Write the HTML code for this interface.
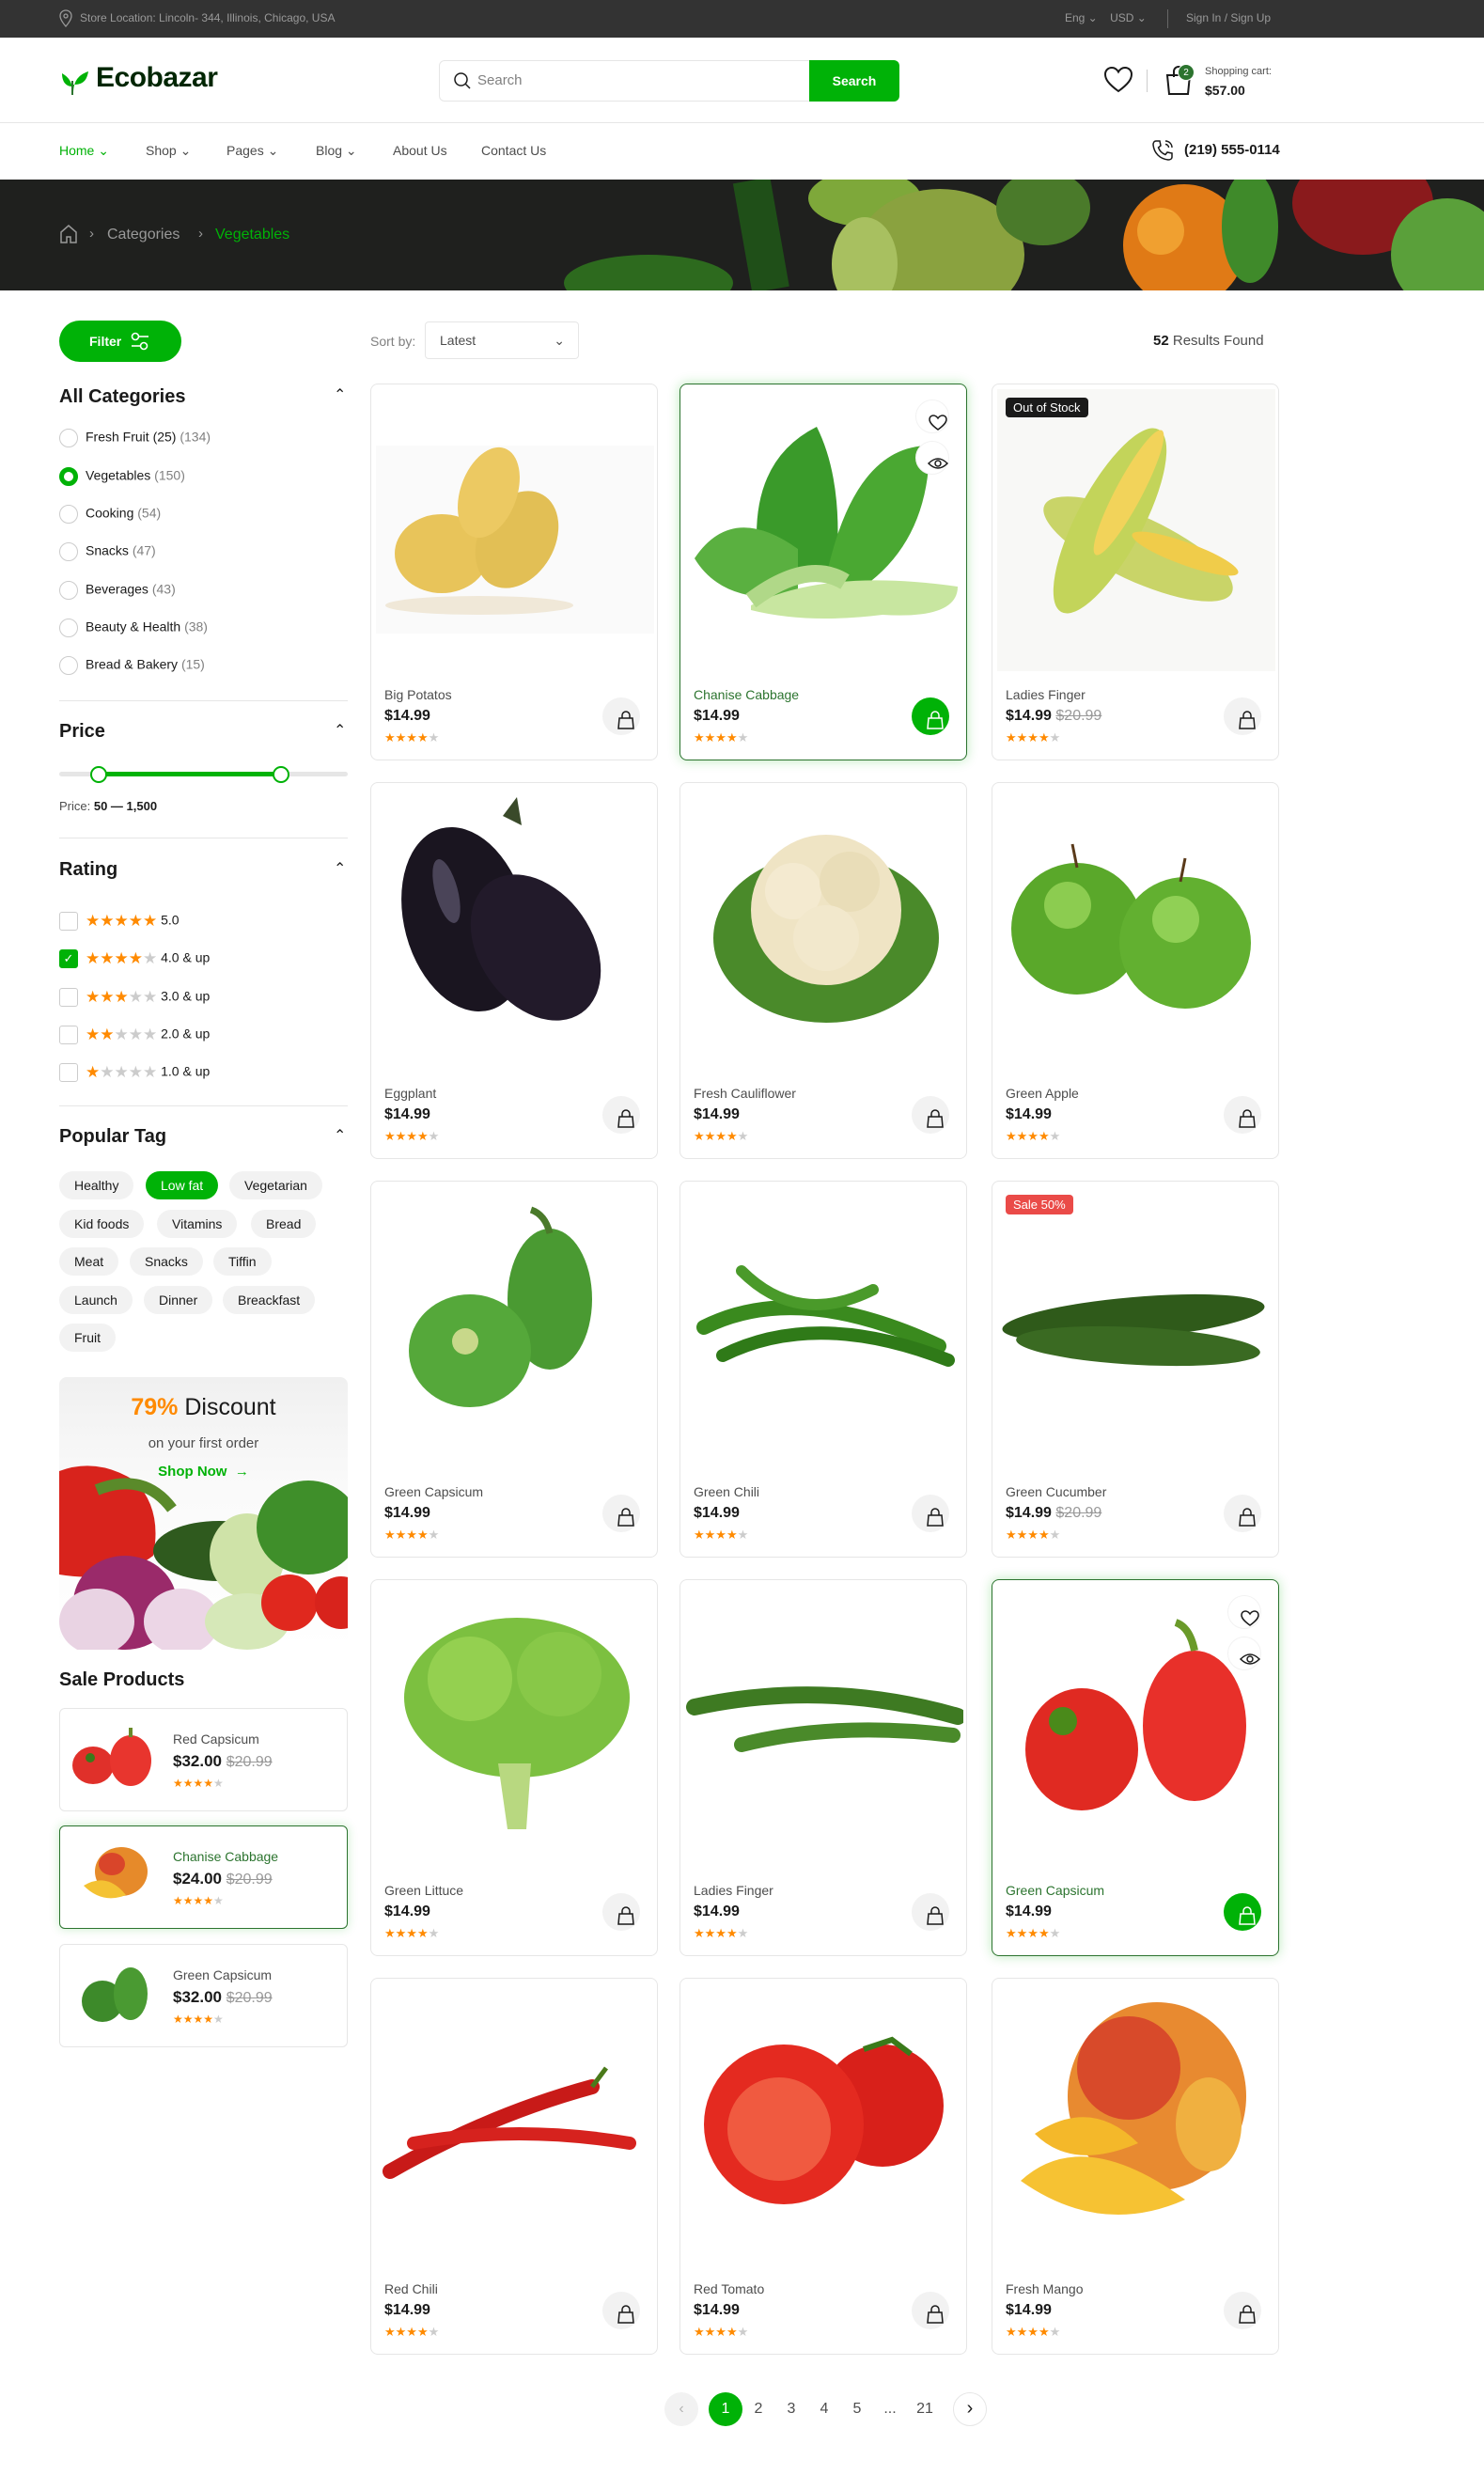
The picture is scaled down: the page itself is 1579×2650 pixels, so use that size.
<!DOCTYPE html>
<html><head><meta charset="utf-8"><style>
*{box-sizing:border-box;margin:0;padding:0}
body{width:1579px;height:2650px;position:relative;background:#fff;font-family:"Liberation Sans",sans-serif;color:#1a1a1a;overflow:hidden}
.abs{position:absolute}
.top{left:0;top:0;width:1579px;height:40px;background:#333;color:#999;font-size:12px}
.hdr-line{left:0;top:130px;width:1579px;height:1px;background:#e6e6e6}
.nav a{position:absolute;top:152px;font-size:14px;color:#4d4d4d;text-decoration:none}
.banner{left:0;top:191px;width:1579px;height:118px;background:#1d1e1c;overflow:hidden}
.h3{font-size:20px;font-weight:bold;color:#1a1a1a}
.cat{position:absolute;left:63px;font-size:14px;color:#1a1a1a}
.cat i{display:inline-block;width:20px;height:20px;border:1px solid #ccc;border-radius:50%;vertical-align:middle;margin-right:8px}
.cat span{color:#808080}
.sep{position:absolute;left:63px;width:307px;height:1px;background:#e6e6e6}
.rt{position:absolute;left:63px;font-size:14px}
.rt i{display:inline-block;width:20px;height:20px;border:1px solid #ccc;border-radius:3px;vertical-align:middle;margin-right:8px}
.st{color:#ff8a00;letter-spacing:0px;font-size:17px;vertical-align:middle}
.st b{color:#ccc;font-weight:normal}
.tag{position:absolute;height:30px;line-height:30px;padding:0 16px;border-radius:15px;background:#f2f2f2;font-size:14px;color:#1a1a1a}
.card{position:absolute;width:306px;height:401px;border:1px solid #e6e6e6;border-radius:8px;background:#fff;overflow:hidden}
.card.act{border-color:#2c742f;box-shadow:0 0 12px rgba(32,181,38,.3)}
.card svg{position:absolute;left:5px;top:5px}
.card .nm{position:absolute;left:14px;top:322px;font-size:14px;color:#4d4d4d}
.card.act .nm{color:#2c742f}
.card .pr{position:absolute;left:14px;top:344px;font-size:16px;font-weight:bold}
.card .pr s{color:#999;font-weight:normal}
.card .sr{position:absolute;left:14px;top:368px;font-size:13px;color:#ff8a00}
.card .sr b{color:#ccc;font-weight:normal}
.card .cb{position:absolute;right:18px;top:333px;width:40px;height:40px;border-radius:50%;background:#f2f2f2}
.card.act .cb{background:#00b207}
.ic{position:absolute;right:18px;width:36px;height:36px;border-radius:50%;background:#fff;border:1px solid #f2f2f2}
.badge{position:absolute;left:14px;top:14px;padding:3px 8px;border-radius:4px;font-size:13px;color:#fff}
.sp{position:absolute;left:63px;width:307px;height:110px;border:1px solid #e6e6e6;border-radius:6px;background:#fff}
.sp .t{position:absolute;left:120px;top:24px;font-size:14px;color:#4d4d4d}
.sp .p{position:absolute;left:120px;top:46px;font-size:17px;font-weight:bold}
.sp .p s{color:#999;font-weight:normal;font-size:16px}
.sp .r{position:absolute;left:120px;top:72px;font-size:12px;color:#ff8a00}
.sp .r b{color:#ccc;font-weight:normal}
.pg{position:absolute;top:2545px;width:36px;height:36px;line-height:36px;text-align:center;font-size:16px;color:#4d4d4d;border-radius:50%}
</style></head><body>

<div class="abs top">
 <svg class="abs" style="left:62px;top:10px" width="16" height="20" viewBox="0 0 16 20"><path d="M8 1C4.5 1 2 3.6 2 7c0 4.5 6 11 6 11s6-6.5 6-11c0-3.4-2.5-6-6-6z" fill="none" stroke="#999" stroke-width="1.3"/><circle cx="8" cy="7" r="2" fill="none" stroke="#999" stroke-width="1.3"/></svg>
 <span class="abs" style="left:85px;top:12px">Store Location: Lincoln- 344, Illinois, Chicago, USA</span>
 <span class="abs" style="left:1133px;top:12px">Eng ⌄ &nbsp;&nbsp; USD ⌄</span>
 <span class="abs" style="left:1242px;top:10px;width:1px;height:20px;background:#666"></span>
 <span class="abs" style="left:1262px;top:12px">Sign In / Sign Up</span>
</div>

<svg class="abs" style="left:62px;top:70px" width="34" height="32" viewBox="0 0 34 32"><path d="M15 30 C15 20 14 14 4 8 C4 18 9 22 15 22" fill="#00b207"/><path d="M16 30 C16 18 20 10 32 6 C30 18 24 20 16 20" fill="#00b207"/><path d="M15 31 V16" stroke="#2c742f" stroke-width="2"/></svg>
<div class="abs" style="left:102px;top:66px;font-size:30px;font-weight:bold;color:#002603;letter-spacing:-0.5px">Ecobazar</div>

<div class="abs" style="left:467px;top:64px;width:395px;height:44px;border:1px solid #e6e6e6;border-radius:6px 0 0 6px"></div>
<svg class="abs" style="left:482px;top:76px" width="20" height="20" viewBox="0 0 20 20"><circle cx="8.5" cy="8.5" r="6.5" fill="none" stroke="#1a1a1a" stroke-width="1.5"/><path d="M13.5 13.5 L18 18" stroke="#1a1a1a" stroke-width="1.5"/></svg>
<div class="abs" style="left:508px;top:77px;font-size:15px;color:#808080">Search</div>
<div class="abs" style="left:861px;top:64px;width:96px;height:44px;background:#00b207;border-radius:0 6px 6px 0;color:#fff;font-size:14px;font-weight:bold;text-align:center;line-height:44px">Search</div>

<svg class="abs" style="left:1174px;top:70px" width="32" height="30" viewBox="0 0 32 30"><path d="M16 27 C5 19 2 14 2 9 C2 5 5 2 9 2 C12 2 14.5 4 16 6.5 C17.5 4 20 2 23 2 C27 2 30 5 30 9 C30 14 27 19 16 27Z" fill="none" stroke="#1a1a1a" stroke-width="2"/></svg>
<div class="abs" style="left:1220px;top:74px;width:1px;height:24px;background:#ccc"></div>
<svg class="abs" style="left:1238px;top:68px" width="32" height="34" viewBox="0 0 32 34"><path d="M4 12 H28 L26 32 H6 Z" fill="none" stroke="#1a1a1a" stroke-width="2"/><path d="M11 14 V8 A5 5 0 0 1 21 8 V14" fill="none" stroke="#1a1a1a" stroke-width="2"/></svg>
<div class="abs" style="left:1253px;top:68px;width:18px;height:18px;border-radius:50%;background:#2c742f;color:#fff;font-size:10px;text-align:center;line-height:18px;border:1px solid #fff">2</div>
<div class="abs" style="left:1282px;top:70px;font-size:11px;color:#4d4d4d">Shopping cart:</div>
<div class="abs" style="left:1282px;top:88px;font-size:14px;font-weight:bold">$57.00</div>

<div class="abs hdr-line"></div>
<div class="nav">
 <a style="left:63px;color:#00b207">Home ⌄</a>
 <a style="left:155px">Shop ⌄</a>
 <a style="left:241px">Pages ⌄</a>
 <a style="left:336px">Blog ⌄</a>
 <a style="left:418px">About Us</a>
 <a style="left:512px">Contact Us</a>
</div>
<svg class="abs" style="left:1225px;top:148px" width="24" height="24" viewBox="0 0 24 24"><path d="M5 2 L9 2 L10 7 L7.5 9 C9 13 11 15 15 16.5 L17 14 L22 15 V19 C22 21 20 22 18 22 C9 21 3 15 2 6 C2 4 3 2 5 2Z" fill="none" stroke="#1a1a1a" stroke-width="1.5"/><path d="M15 2 A7 7 0 0 1 22 9 M15 5.5 A3.5 3.5 0 0 1 18.5 9" fill="none" stroke="#1a1a1a" stroke-width="1.4"/></svg>
<div class="abs" style="left:1260px;top:151px;font-size:15px;font-weight:bold">(219) 555-0114</div>

<div class="abs banner">
 <svg width="1579" height="118" viewBox="0 0 1579 118">
  <rect width="1579" height="118" fill="#1f201e"/>
  <ellipse cx="690" cy="110" rx="90" ry="30" fill="#2d6a1e"/>
  <rect x="790" y="0" width="40" height="118" fill="#1f4f18" transform="rotate(-10 810 60)"/>
  <ellipse cx="920" cy="20" rx="60" ry="30" fill="#7ea83a"/>
  <ellipse cx="1000" cy="80" rx="90" ry="70" fill="#8aa23f"/>
  <ellipse cx="920" cy="90" rx="35" ry="50" fill="#a8c060"/>
  <ellipse cx="1110" cy="30" rx="50" ry="40" fill="#4a7a2a"/>
  <ellipse cx="1260" cy="70" rx="65" ry="65" fill="#e07a16"/>
  <ellipse cx="1235" cy="55" rx="25" ry="25" fill="#f0a030"/>
  <ellipse cx="1330" cy="50" rx="30" ry="60" fill="#3f8a2a"/>
  <ellipse cx="1450" cy="25" rx="75" ry="55" fill="#8a1a1c"/>
  <ellipse cx="1540" cy="80" rx="60" ry="60" fill="#5aa03a"/>
 </svg>
 <svg class="abs" style="left:63px;top:47px" width="20" height="22" viewBox="0 0 20 22"><path d="M2 9 L10 2 L18 9 V20 H12 V14 H8 V20 H2Z" fill="none" stroke="#999" stroke-width="1.5"/></svg>
 <span class="abs" style="left:95px;top:49px;color:#999;font-size:15px">›</span>
 <span class="abs" style="left:114px;top:50px;color:#999;font-size:16px">Categories</span>
 <span class="abs" style="left:211px;top:49px;color:#999;font-size:15px">›</span>
 <span class="abs" style="left:229px;top:50px;color:#00b207;font-size:16px">Vegetables</span>
</div>

<!-- Sidebar -->
<div class="abs" style="left:63px;top:341px;width:130px;height:44px;border-radius:22px;background:#00b207;color:#fff;font-weight:bold;font-size:14px;line-height:44px;padding-left:32px">Filter</div>
<svg class="abs" style="left:138px;top:352px" width="22" height="22" viewBox="0 0 22 22"><circle cx="6" cy="6" r="3.5" fill="none" stroke="#fff" stroke-width="1.6"/><path d="M10 6 H20" stroke="#fff" stroke-width="1.6"/><circle cx="15" cy="16" r="3.5" fill="none" stroke="#fff" stroke-width="1.6"/><path d="M2 16 H11" stroke="#fff" stroke-width="1.6"/></svg>

<div class="abs h3" style="left:63px;top:411px">All Categories</div>
<div class="abs" style="left:355px;top:410px;font-size:16px">⌃</div>
<div class="cat" style="top:456px"><i></i>Fresh Fruit (25) <span>(134)</span></div>
<div class="cat" style="top:497px"><i style="border:5px solid #00b207;box-shadow:inset 0 0 0 2px #fff"></i>Vegetables <span>(150)</span></div>
<div class="cat" style="top:537px"><i></i>Cooking <span>(54)</span></div>
<div class="cat" style="top:577px"><i></i>Snacks <span>(47)</span></div>
<div class="cat" style="top:618px"><i></i>Beverages <span>(43)</span></div>
<div class="cat" style="top:658px"><i></i>Beauty &amp; Health <span>(38)</span></div>
<div class="cat" style="top:698px"><i></i>Bread &amp; Bakery <span>(15)</span></div>
<div class="sep" style="top:745px"></div>

<div class="abs h3" style="left:63px;top:767px">Price</div>
<div class="abs" style="left:355px;top:767px;font-size:16px">⌃</div>
<div class="abs" style="left:63px;top:821px;width:307px;height:5px;border-radius:3px;background:#e6e6e6"></div>
<div class="abs" style="left:104px;top:821px;width:195px;height:5px;background:#00b207"></div>
<div class="abs" style="left:96px;top:815px;width:18px;height:18px;border-radius:50%;background:#fff;border:2px solid #00b207"></div>
<div class="abs" style="left:290px;top:815px;width:18px;height:18px;border-radius:50%;background:#fff;border:2px solid #00b207"></div>
<div class="abs" style="left:63px;top:850px;font-size:13px;color:#4d4d4d">Price: <b style="color:#1a1a1a">50 — 1,500</b></div>
<div class="sep" style="top:891px"></div>

<div class="abs h3" style="left:63px;top:914px">Rating</div>
<div class="abs" style="left:355px;top:914px;font-size:16px">⌃</div>
<div class="rt" style="top:970px"><i></i><span class="st">★★★★★</span> 5.0</div>
<div class="rt" style="top:1010px"><i style="background:#00b207;border-color:#00b207;color:#fff;font-style:normal;text-align:center;line-height:18px;font-size:13px">✓</i><span class="st">★★★★<b>★</b></span> 4.0 &amp; up</div>
<div class="rt" style="top:1051px"><i></i><span class="st">★★★<b>★★</b></span> 3.0 &amp; up</div>
<div class="rt" style="top:1091px"><i></i><span class="st">★★<b>★★★</b></span> 2.0 &amp; up</div>
<div class="rt" style="top:1131px"><i></i><span class="st">★<b>★★★★</b></span> 1.0 &amp; up</div>
<div class="sep" style="top:1176px"></div>

<div class="abs h3" style="left:63px;top:1198px">Popular Tag</div>
<div class="abs" style="left:355px;top:1198px;font-size:16px">⌃</div>
<div class="tag" style="left:63px;top:1246px">Healthy</div>
<div class="tag" style="left:155px;top:1246px;background:#00b207;color:#fff">Low fat</div>
<div class="tag" style="left:244px;top:1246px">Vegetarian</div>
<div class="tag" style="left:63px;top:1287px">Kid foods</div>
<div class="tag" style="left:167px;top:1287px">Vitamins</div>
<div class="tag" style="left:267px;top:1287px">Bread</div>
<div class="tag" style="left:63px;top:1327px">Meat</div>
<div class="tag" style="left:138px;top:1327px">Snacks</div>
<div class="tag" style="left:227px;top:1327px">Tiffin</div>
<div class="tag" style="left:63px;top:1368px">Launch</div>
<div class="tag" style="left:153px;top:1368px">Dinner</div>
<div class="tag" style="left:237px;top:1368px">Breackfast</div>
<div class="tag" style="left:63px;top:1408px">Fruit</div>

<div class="abs" style="left:63px;top:1465px;width:307px;height:290px;border-radius:8px;overflow:hidden;background:linear-gradient(#f0f0f0,#fafafa 40%,#fff)">
 <svg class="abs" style="left:0;top:80px" width="307" height="210" viewBox="0 0 307 210">
  <path d="M0 20 Q40 5 80 30 Q110 60 100 110 Q60 140 0 130Z" fill="#d8231c"/>
  <path d="M40 40 Q90 20 120 60" stroke="#5a8a2a" stroke-width="12" fill="none"/>
  <ellipse cx="170" cy="105" rx="70" ry="32" fill="#2f5a1e"/>
  <ellipse cx="200" cy="110" rx="40" ry="45" fill="#cfe3a8"/>
  <ellipse cx="265" cy="80" rx="55" ry="50" fill="#3f8f2a"/>
  <ellipse cx="70" cy="160" rx="55" ry="50" fill="#9a2a6a"/>
  <ellipse cx="40" cy="180" rx="40" ry="35" fill="#e9d3e3"/>
  <ellipse cx="130" cy="180" rx="40" ry="35" fill="#ecd6e6"/>
  <ellipse cx="200" cy="180" rx="45" ry="30" fill="#d6e8b8"/>
  <circle cx="245" cy="160" r="30" fill="#e0281e"/>
  <circle cx="300" cy="160" r="28" fill="#d8231c"/>
 </svg>
 <div class="abs" style="left:0;top:18px;width:307px;text-align:center;font-size:25px"><b style="color:#ff8a00">79%</b> Discount</div>
 <div class="abs" style="left:0;top:62px;width:307px;text-align:center;font-size:15px;color:#4d4d4d">on your first order</div>
 <div class="abs" style="left:0;top:92px;width:307px;text-align:center;font-size:15px;color:#00b207;font-weight:bold">Shop Now &nbsp;→</div>
</div>

<div class="abs" style="left:63px;top:1776px;font-size:20px;font-weight:bold">Sale Products</div>
<div class="sp" style="top:1817px"><svg class="abs" style="left:10px;top:20px" width="95" height="70" viewBox="0 0 95 70"><ellipse cx="25" cy="40" rx="22" ry="20" fill="#e0302a"/><ellipse cx="65" cy="35" rx="22" ry="27" fill="#e8352e"/><path d="M65 10 V0" stroke="#6a8a2a" stroke-width="4"/><circle cx="22" cy="32" r="5" fill="#3a7a1a"/></svg><div class="t">Red Capsicum</div><div class="p">$32.00 <s>$20.99</s></div><div class="r">★★★★<b>★</b></div></div>
<div class="sp" style="top:1942px;border-color:#2c742f;box-shadow:0 0 10px rgba(32,181,38,.25)"><svg class="abs" style="left:20px;top:18px" width="80" height="70" viewBox="0 0 80 70"><ellipse cx="45" cy="30" rx="28" ry="26" fill="#e68a2a"/><ellipse cx="35" cy="22" rx="14" ry="12" fill="#d9452a"/><path d="M5 45 Q30 30 50 55 Q25 65 5 45Z" fill="#f4c233"/></svg><div class="t" style="color:#2c742f">Chanise Cabbage</div><div class="p">$24.00 <s>$20.99</s></div><div class="r">★★★★<b>★</b></div></div>
<div class="sp" style="top:2068px"><svg class="abs" style="left:15px;top:20px" width="85" height="70" viewBox="0 0 85 70"><ellipse cx="30" cy="40" rx="22" ry="22" fill="#3d8a2a"/><ellipse cx="60" cy="32" rx="18" ry="28" fill="#4a9a32"/></svg><div class="t">Green Capsicum</div><div class="p">$32.00 <s>$20.99</s></div><div class="r">★★★★<b>★</b></div></div>

<!-- Toolbar -->
<div class="abs" style="left:394px;top:355px;font-size:14px;color:#808080">Sort by:</div>
<div class="abs" style="left:452px;top:342px;width:164px;height:40px;border:1px solid #e6e6e6;border-radius:4px;font-size:14px;color:#4d4d4d;line-height:38px;padding-left:15px">Latest<span style="position:absolute;right:14px">⌄</span></div>
<div class="abs" style="left:1227px;top:354px;font-size:15px;color:#4d4d4d"><b style="color:#1a1a1a">52</b> Results Found</div>

<!-- Row 1 -->
<div class="card" style="left:394px;top:408px"><svg width="296" height="300" viewBox="0 0 296 300"><rect x="0" y="60" width="296" height="200" fill="#fafafa"/><ellipse cx="70" cy="175" rx="50" ry="42" fill="#e8c45a"/><ellipse cx="150" cy="160" rx="40" ry="55" fill="#e2bf55" transform="rotate(30 150 160)"/><ellipse cx="120" cy="110" rx="30" ry="50" fill="#ecc962" transform="rotate(20 120 110)"/><ellipse cx="110" cy="230" rx="100" ry="10" fill="#f0e8d8"/></svg><div class="nm">Big Potatos</div><div class="pr">$14.99</div><div class="sr">★★★★<b>★</b></div><div class="cb"><svg width="40" height="40" viewBox="0 0 40 40"><path d="M13 17 H27 L28 28 H12Z M16 17 V14 A4 4 0 0 1 24 14 V17" fill="none" stroke="#1a1a1a" stroke-width="1.5"/></svg></div></div>

<div class="card act" style="left:723px;top:408px"><svg width="296" height="300" viewBox="0 0 296 300"><path d="M80 200 Q60 80 140 40 Q170 100 160 200Z" fill="#3a9a2a"/><path d="M150 200 Q180 60 260 60 Q260 160 190 210Z" fill="#4aa832"/><path d="M10 180 Q50 120 120 170 L120 220 Q40 230 10 180Z" fill="#5ab040"/><path d="M70 230 Q150 190 290 210 Q290 245 210 240 Q130 250 70 235Z" fill="#c8e6a0"/><path d="M70 225 Q130 180 170 205" stroke="#b0d888" stroke-width="18" fill="none"/></svg><div class="nm">Chanise Cabbage</div><div class="pr">$14.99</div><div class="sr">★★★★<b>★</b></div><div class="cb"><svg width="40" height="40" viewBox="0 0 40 40"><path d="M13 17 H27 L28 28 H12Z M16 17 V14 A4 4 0 0 1 24 14 V17" fill="none" stroke="#fff" stroke-width="1.5"/></svg></div>
<div class="ic" style="top:16px"><svg width="36" height="36" viewBox="0 0 36 36"><path d="M18 26 C11 21 9 18 9 15 C9 12.5 11 11 13 11 C15 11 17 12.5 18 14 C19 12.5 21 11 23 11 C25 11 27 12.5 27 15 C27 18 25 21 18 26Z" fill="none" stroke="#1a1a1a" stroke-width="1.5"/></svg></div>
<div class="ic" style="top:60px"><svg width="36" height="36" viewBox="0 0 36 36"><path d="M8 18 Q18 8 28 18 Q18 28 8 18Z" fill="none" stroke="#1a1a1a" stroke-width="1.5"/><circle cx="18" cy="18" r="3" fill="none" stroke="#1a1a1a" stroke-width="1.5"/></svg></div></div>

<div class="card" style="left:1055px;top:408px"><svg width="296" height="300" viewBox="0 0 296 300"><rect x="0" y="0" width="296" height="300" fill="#f8f8f6"/><ellipse cx="150" cy="170" rx="110" ry="34" fill="#c9d468" transform="rotate(25 150 170)"/><ellipse cx="120" cy="140" rx="35" ry="110" fill="#c3d45a" transform="rotate(28 120 140)"/><ellipse cx="140" cy="110" rx="14" ry="75" fill="#f2d35a" transform="rotate(28 140 110)"/><ellipse cx="200" cy="175" rx="60" ry="12" fill="#f0cc4a" transform="rotate(20 200 175)"/></svg><div class="badge" style="background:#1a1a1a">Out of Stock</div><div class="nm">Ladies Finger</div><div class="pr">$14.99 <s>$20.99</s></div><div class="sr">★★★★<b>★</b></div><div class="cb"><svg width="40" height="40" viewBox="0 0 40 40"><path d="M13 17 H27 L28 28 H12Z M16 17 V14 A4 4 0 0 1 24 14 V17" fill="none" stroke="#1a1a1a" stroke-width="1.5"/></svg></div></div>

<!-- Row 2 -->
<div class="card" style="left:394px;top:832px"><svg width="296" height="300" viewBox="0 0 296 300"><ellipse cx="95" cy="140" rx="65" ry="100" fill="#1a1520" transform="rotate(-15 95 140)"/><ellipse cx="170" cy="170" rx="60" ry="85" fill="#221a2a" transform="rotate(-35 170 170)"/><path d="M135 30 L150 10 L155 40Z" fill="#3a4a2a"/><ellipse cx="75" cy="110" rx="12" ry="35" fill="#4a4458" transform="rotate(-15 75 110)"/></svg><div class="nm">Eggplant</div><div class="pr">$14.99</div><div class="sr">★★★★<b>★</b></div><div class="cb"><svg width="40" height="40" viewBox="0 0 40 40"><path d="M13 17 H27 L28 28 H12Z M16 17 V14 A4 4 0 0 1 24 14 V17" fill="none" stroke="#1a1a1a" stroke-width="1.5"/></svg></div></div>

<div class="card" style="left:723px;top:832px"><svg width="296" height="300" viewBox="0 0 296 300"><ellipse cx="150" cy="160" rx="120" ry="90" fill="#4a8a2a"/><circle cx="150" cy="130" r="80" fill="#efe4c4"/><circle cx="115" cy="110" r="30" fill="#f4ead0"/><circle cx="175" cy="100" r="32" fill="#e9ddb8"/><circle cx="150" cy="160" r="35" fill="#f2e8cc"/></svg><div class="nm">Fresh Cauliflower</div><div class="pr">$14.99</div><div class="sr">★★★★<b>★</b></div><div class="cb"><svg width="40" height="40" viewBox="0 0 40 40"><path d="M13 17 H27 L28 28 H12Z M16 17 V14 A4 4 0 0 1 24 14 V17" fill="none" stroke="#1a1a1a" stroke-width="1.5"/></svg></div></div>

<div class="card" style="left:1055px;top:832px"><svg width="296" height="300" viewBox="0 0 296 300"><circle cx="85" cy="150" r="70" fill="#5aa82a"/><circle cx="200" cy="165" r="70" fill="#62b030"/><circle cx="75" cy="125" r="25" fill="#8ccc50"/><circle cx="190" cy="140" r="25" fill="#90d055"/><path d="M85 85 L80 60 M195 100 L200 75" stroke="#5a3a1a" stroke-width="3"/></svg><div class="nm">Green Apple</div><div class="pr">$14.99</div><div class="sr">★★★★<b>★</b></div><div class="cb"><svg width="40" height="40" viewBox="0 0 40 40"><path d="M13 17 H27 L28 28 H12Z M16 17 V14 A4 4 0 0 1 24 14 V17" fill="none" stroke="#1a1a1a" stroke-width="1.5"/></svg></div></div>

<!-- Row 3 -->
<div class="card" style="left:394px;top:1256px"><svg width="296" height="300" viewBox="0 0 296 300"><ellipse cx="185" cy="120" rx="45" ry="75" fill="#4a9a32"/><ellipse cx="100" cy="175" rx="65" ry="60" fill="#55a83a"/><circle cx="95" cy="165" r="14" fill="#c8d88a"/><path d="M185 50 Q180 30 165 25" stroke="#4a7a2a" stroke-width="7" fill="none"/></svg><div class="nm">Green Capsicum</div><div class="pr">$14.99</div><div class="sr">★★★★<b>★</b></div><div class="cb"><svg width="40" height="40" viewBox="0 0 40 40"><path d="M13 17 H27 L28 28 H12Z M16 17 V14 A4 4 0 0 1 24 14 V17" fill="none" stroke="#1a1a1a" stroke-width="1.5"/></svg></div></div>

<div class="card" style="left:723px;top:1256px"><svg width="296" height="300" viewBox="0 0 296 300"><path d="M20 150 Q120 100 270 170" stroke="#3a8a1e" stroke-width="16" fill="none" stroke-linecap="round"/><path d="M40 180 Q140 130 280 185" stroke="#2f7a18" stroke-width="14" fill="none" stroke-linecap="round"/><path d="M60 90 Q120 150 200 110" stroke="#4a9a2a" stroke-width="12" fill="none" stroke-linecap="round"/></svg><div class="nm">Green Chili</div><div class="pr">$14.99</div><div class="sr">★★★★<b>★</b></div><div class="cb"><svg width="40" height="40" viewBox="0 0 40 40"><path d="M13 17 H27 L28 28 H12Z M16 17 V14 A4 4 0 0 1 24 14 V17" fill="none" stroke="#1a1a1a" stroke-width="1.5"/></svg></div></div>

<div class="card" style="left:1055px;top:1256px"><svg width="296" height="300" viewBox="0 0 296 300"><ellipse cx="145" cy="140" rx="140" ry="22" fill="#2f5a1a" transform="rotate(-5 145 140)"/><ellipse cx="150" cy="170" rx="130" ry="20" fill="#3a6a22" transform="rotate(3 150 170)"/></svg><div class="badge" style="background:#ea4b48">Sale 50%</div><div class="nm">Green Cucumber</div><div class="pr">$14.99 <s>$20.99</s></div><div class="sr">★★★★<b>★</b></div><div class="cb"><svg width="40" height="40" viewBox="0 0 40 40"><path d="M13 17 H27 L28 28 H12Z M16 17 V14 A4 4 0 0 1 24 14 V17" fill="none" stroke="#1a1a1a" stroke-width="1.5"/></svg></div></div>

<!-- Row 4 -->
<div class="card" style="left:394px;top:1680px"><svg width="296" height="300" viewBox="0 0 296 300"><ellipse cx="150" cy="120" rx="120" ry="85" fill="#7cc040"/><circle cx="100" cy="100" r="45" fill="#94d050"/><circle cx="195" cy="95" r="45" fill="#88c848"/><path d="M130 190 L140 260 L160 260 L165 190Z" fill="#b8d880"/></svg><div class="nm">Green Littuce</div><div class="pr">$14.99</div><div class="sr">★★★★<b>★</b></div><div class="cb"><svg width="40" height="40" viewBox="0 0 40 40"><path d="M13 17 H27 L28 28 H12Z M16 17 V14 A4 4 0 0 1 24 14 V17" fill="none" stroke="#1a1a1a" stroke-width="1.5"/></svg></div></div>

<div class="card" style="left:723px;top:1680px"><svg width="296" height="300" viewBox="0 0 296 300"><path d="M10 130 Q150 100 290 140" stroke="#3e7a22" stroke-width="18" fill="none" stroke-linecap="round"/><path d="M60 170 Q160 145 285 160" stroke="#4a8a2a" stroke-width="16" fill="none" stroke-linecap="round"/></svg><div class="nm">Ladies Finger</div><div class="pr">$14.99</div><div class="sr">★★★★<b>★</b></div><div class="cb"><svg width="40" height="40" viewBox="0 0 40 40"><path d="M13 17 H27 L28 28 H12Z M16 17 V14 A4 4 0 0 1 24 14 V17" fill="none" stroke="#1a1a1a" stroke-width="1.5"/></svg></div></div>

<div class="card act" style="left:1055px;top:1680px"><svg width="296" height="300" viewBox="0 0 296 300"><ellipse cx="90" cy="175" rx="60" ry="65" fill="#e02a22"/><ellipse cx="210" cy="150" rx="55" ry="80" fill="#e8302a"/><path d="M210 70 Q205 45 190 40" stroke="#6a9a2a" stroke-width="8" fill="none"/><circle cx="70" cy="145" r="15" fill="#4a8a1a"/></svg><div class="nm">Green Capsicum</div><div class="pr">$14.99</div><div class="sr">★★★★<b>★</b></div><div class="cb"><svg width="40" height="40" viewBox="0 0 40 40"><path d="M13 17 H27 L28 28 H12Z M16 17 V14 A4 4 0 0 1 24 14 V17" fill="none" stroke="#fff" stroke-width="1.5"/></svg></div>
<div class="ic" style="top:16px"><svg width="36" height="36" viewBox="0 0 36 36"><path d="M18 26 C11 21 9 18 9 15 C9 12.5 11 11 13 11 C15 11 17 12.5 18 14 C19 12.5 21 11 23 11 C25 11 27 12.5 27 15 C27 18 25 21 18 26Z" fill="none" stroke="#1a1a1a" stroke-width="1.5"/></svg></div>
<div class="ic" style="top:60px"><svg width="36" height="36" viewBox="0 0 36 36"><path d="M8 18 Q18 8 28 18 Q18 28 8 18Z" fill="none" stroke="#1a1a1a" stroke-width="1.5"/><circle cx="18" cy="18" r="3" fill="none" stroke="#1a1a1a" stroke-width="1.5"/></svg></div></div>

<!-- Row 5 -->
<div class="card" style="left:394px;top:2104px"><svg width="296" height="300" viewBox="0 0 296 300"><path d="M15 200 Q120 140 230 110" stroke="#c81a18" stroke-width="16" fill="none" stroke-linecap="round"/><path d="M40 170 Q150 150 270 170" stroke="#d6221e" stroke-width="14" fill="none" stroke-linecap="round"/><path d="M230 110 L245 90" stroke="#4a7a1a" stroke-width="5"/></svg><div class="nm">Red Chili</div><div class="pr">$14.99</div><div class="sr">★★★★<b>★</b></div><div class="cb"><svg width="40" height="40" viewBox="0 0 40 40"><path d="M13 17 H27 L28 28 H12Z M16 17 V14 A4 4 0 0 1 24 14 V17" fill="none" stroke="#1a1a1a" stroke-width="1.5"/></svg></div></div>

<div class="card" style="left:723px;top:2104px"><svg width="296" height="300" viewBox="0 0 296 300"><circle cx="210" cy="130" r="65" fill="#d8201a"/><circle cx="105" cy="150" r="85" fill="#e42a20"/><circle cx="100" cy="155" r="55" fill="#f05a40"/><path d="M190 70 L220 60 L240 75" stroke="#3a7a1a" stroke-width="6" fill="none"/></svg><div class="nm">Red Tomato</div><div class="pr">$14.99</div><div class="sr">★★★★<b>★</b></div><div class="cb"><svg width="40" height="40" viewBox="0 0 40 40"><path d="M13 17 H27 L28 28 H12Z M16 17 V14 A4 4 0 0 1 24 14 V17" fill="none" stroke="#1a1a1a" stroke-width="1.5"/></svg></div></div>

<div class="card" style="left:1055px;top:2104px"><svg width="296" height="300" viewBox="0 0 296 300"><ellipse cx="170" cy="120" rx="95" ry="100" fill="#e88a30"/><ellipse cx="140" cy="90" rx="55" ry="55" fill="#d84a2a"/><ellipse cx="225" cy="150" rx="35" ry="50" fill="#f0b040"/><path d="M25 210 Q90 150 200 230 Q110 270 25 210Z" fill="#f6c233"/><path d="M40 160 Q100 120 150 170 Q80 200 40 160Z" fill="#f4b82a"/></svg><div class="nm">Fresh Mango</div><div class="pr">$14.99</div><div class="sr">★★★★<b>★</b></div><div class="cb"><svg width="40" height="40" viewBox="0 0 40 40"><path d="M13 17 H27 L28 28 H12Z M16 17 V14 A4 4 0 0 1 24 14 V17" fill="none" stroke="#1a1a1a" stroke-width="1.5"/></svg></div></div>

<!-- Pagination -->
<div class="pg" style="left:707px;background:#f2f2f2;color:#b3b3b3">‹</div>
<div class="pg" style="left:754px;background:#00b207;color:#fff">1</div>
<div class="pg" style="left:789px">2</div>
<div class="pg" style="left:824px">3</div>
<div class="pg" style="left:859px">4</div>
<div class="pg" style="left:894px">5</div>
<div class="pg" style="left:929px">...</div>
<div class="pg" style="left:966px">21</div>
<div class="pg" style="left:1014px;border:1px solid #e6e6e6;color:#1a1a1a;font-size:20px;line-height:32px">›</div>
</body></html>
